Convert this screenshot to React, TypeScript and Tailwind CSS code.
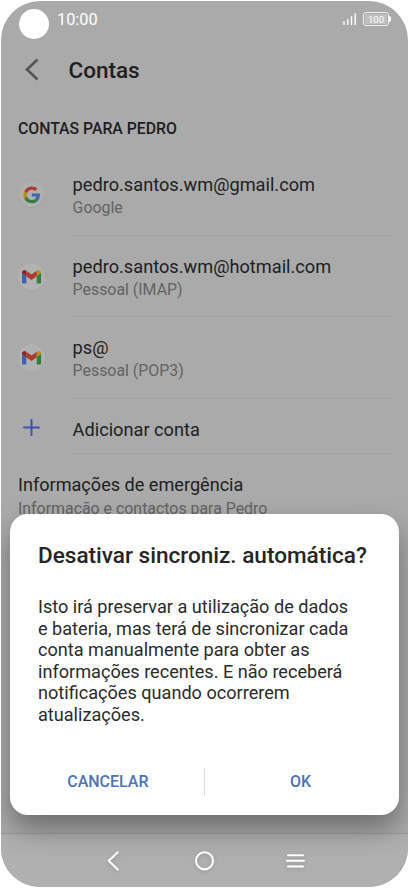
import type { ReactNode } from 'react';

interface AccountRowProps {
  icon: ReactNode;
  title: string;
  subtitle: string;
}

function GoogleIcon() {
  return (
    <svg className="w-[27px] h-[27px]" viewBox="0 0 27 27">
      <circle cx="13.5" cy="14.2" r="12.6" fill="#999999" />
      <circle cx="13.5" cy="13.5" r="12.6" fill="#b0b0b0" />
      <g transform="translate(5.4 5.4) scale(0.352)">
        <path fill="#b33a30" d="M24 9.5c3.54 0 6.71 1.22 9.21 3.6l6.85-6.85C35.9 2.38 30.47 0 24 0 14.62 0 6.51 5.38 2.56 13.22l7.98 6.19C12.43 13.72 17.74 9.5 24 9.5z" />
        <path fill="#3d69ad" d="M46.98 24.55c0-1.57-.15-3.09-.38-4.55H24v9.02h12.94c-.58 2.96-2.26 5.48-4.78 7.18l7.73 6c4.51-4.18 7.09-10.36 7.09-17.65z" />
        <path fill="#b78a13" d="M10.53 28.59c-.48-1.45-.76-2.99-.76-4.59s.27-3.14.76-4.59l-7.98-6.19C.92 16.46 0 20.12 0 24c0 3.88.92 7.54 2.56 10.78l7.97-6.19z" />
        <path fill="#31803f" d="M24 48c6.48 0 11.93-2.13 15.89-5.81l-7.73-6c-2.15 1.45-4.92 2.3-8.16 2.3-6.26 0-11.57-4.22-13.47-9.91l-7.98 6.19C6.51 42.62 14.62 48 24 48z" />
      </g>
    </svg>
  );
}

function GmailIcon() {
  return (
    <svg className="w-[27px] h-[27px]" viewBox="0 0 27 27">
      <circle cx="13.5" cy="13.5" r="13.2" fill="#b2b2b2" />
      <path fill="#3d65af" d="M4 9.5v9.8c0 .8.5 1.3 1.3 1.3h3.1v-8z" />
      <path fill="#31803f" d="M23.1 9.5v9.8c0 .8-.5 1.3-1.3 1.3h-3.1v-8z" />
      <path fill="#8d2722" d="M4 9.4c0-2.2 2.4-3.2 4-2l.4.3v5.5L4 9.9z" />
      <path fill="#b99016" d="M23.1 9.4c0-2.2-2.4-3.2-4-2l-.4.3v5.5l4.4-3.3z" />
      <path fill="#ae392f" d="M8.4 7.7l5.15 3.9 5.15-3.9v5.5l-5.15 3.9-5.15-3.9z" />
    </svg>
  );
}

function AccountRow({ icon, title, subtitle }: AccountRowProps) {
  return (
    <div className="flex h-[81.5px]">
      <div className="w-[54.6px] pt-[27px]">{icon}</div>
      <div className="flex-1 border-b border-[#a1a1a1] pt-[19px]">
        <p className="text-[18.2px] leading-6 text-[#202020]">{title}</p>
        <p className="text-[15.9px] leading-[22px] text-[#636363]">{subtitle}</p>
      </div>
    </div>
  );
}

function StatusBar() {
  return (
    <div className="flex h-10 items-start pl-[18px] pr-[17px]">
      <div className="mt-2 h-[30px] w-[30px] rounded-full bg-white" />
      <span className="ml-[8px] mt-[9px] text-[16.3px] leading-5 text-white">10:00</span>
      <svg className="ml-auto mt-3 h-3 w-[14px]" viewBox="0 0 14 12" fill="white">
        <rect x="0.3" y="8" width="1.4" height="4" rx="0.5" />
        <rect x="4" y="6" width="1.4" height="6" rx="0.5" />
        <rect x="7.8" y="3.2" width="1.4" height="8.8" rx="0.5" />
        <rect x="11.5" y="0.3" width="1.4" height="11.7" rx="0.5" />
      </svg>
      <div className="ml-[6px] mt-[11px] flex items-center">
        <div className="h-[14px] w-[26px] rounded-[3px] border border-[#f0f0f0] p-px">
          <div className="h-full rounded-[1px] bg-[#c0c0c0] text-center text-[9.5px] leading-[11px] text-white">100</div>
        </div>
        <div className="h-[6px] w-[2px] rounded-r-sm bg-white" />
      </div>
    </div>
  );
}

function NavigationBar() {
  return (
    <div className="flex h-[54px] justify-center border-t border-[#999999] bg-[#b0b0b0]">
      <svg className="h-[53px] w-[240px] drop-shadow-sm" viewBox="0 0 240 53" fill="none" stroke="white" strokeWidth="2" strokeLinecap="round" strokeLinejoin="round">
        <path d="M32.7 18.2 23.7 26.8 32.7 35.5" />
        <circle cx="119.5" cy="26.8" r="8.5" />
        <path d="M203 21.2H218M202 26.8H219M203 32.4H218" />
      </svg>
    </div>
  );
}

function SyncDialog() {
  return (
    <div className="absolute left-[9px] top-[513px] flex h-[301px] w-[388.5px] flex-col rounded-[18px] bg-white px-7 pt-7 shadow-[0_14px_28px_rgba(0,0,0,0.36)]">
      <h2 className="whitespace-nowrap text-[22.55px] font-medium leading-7 text-[#252525]">Desativar sincroniz. automática?</h2>
      <p className="mt-[26px] whitespace-nowrap text-[18.12px] leading-[21.6px] text-[#2b2b2b]">
        Isto irá preservar a utilização de dados<br />
        e bateria, mas terá de sincronizar cada<br />
        conta manualmente para obter as<br />
        informações recentes. E não receberá<br />
        notificações quando ocorrerem<br />
        atualizações.
      </p>
      <div className="-mx-7 mt-[42px] flex h-7 items-center text-[16px] font-medium text-[#4e72b8]">
        <button className="flex-1 pl-[2px]">CANCELAR</button>
        <div className="h-7 w-px bg-[#dddddd]" />
        <button className="flex-1 pr-[2px]">OK</button>
      </div>
    </div>
  );
}

export default function App() {
  return (
    <div className="h-[888px] w-[409px] bg-white p-px font-[Roboto,sans-serif]">
      <div className="relative flex h-[886px] w-[407px] flex-col overflow-hidden rounded-[39px] bg-[#aaaaaa]">
        <StatusBar />
        <header className="flex h-[58px] items-center pl-6">
          <svg className="h-6 w-[14px]" viewBox="0 0 14 24" fill="none" stroke="#555555" strokeWidth="2.6">
            <path d="M12.5 1.5 2 11.5 12.5 21.5" />
          </svg>
          <h1 className="ml-[29.5px] mt-px text-[22.5px] font-medium text-[#202020]">Contas</h1>
        </header>
        <main className="flex-1 overflow-hidden pl-[17px] pr-[17px]">
          <h2 className="mt-[19px] text-[15.8px] font-medium leading-[22px] text-[#202020]">CONTAS PARA PEDRO</h2>
          <div className="mt-[14px]">
            <AccountRow icon={<GoogleIcon />} title="pedro.santos.wm@gmail.com" subtitle="Google" />
            <AccountRow icon={<GmailIcon />} title="pedro.santos.wm@hotmail.com" subtitle="Pessoal (IMAP)" />
            <AccountRow icon={<GmailIcon />} title="ps@" subtitle="Pessoal (POP3)" />
          </div>
          <div className="flex h-[55px]">
            <div className="w-[54.6px] pl-[5px] pt-5">
              <svg className="h-[17px] w-[17px]" viewBox="0 0 17 17" stroke="#3655ad" strokeWidth="2" strokeLinecap="round">
                <path d="M8.5 1V16M1 8.5H16" />
              </svg>
            </div>
            <p className="flex-1 border-b border-[#a1a1a1] pt-[19px] text-[18.2px] leading-6 text-[#202020]">Adicionar conta</p>
          </div>
          <p className="mt-[19px] text-[18.1px] leading-6 text-[#202020]">Informações de emergência</p>
          <p className="text-[15.9px] leading-[23px] text-[#636363]">Informação e contactos para Pedro</p>
        </main>
        <NavigationBar />
        <SyncDialog />
      </div>
    </div>
  );
}
